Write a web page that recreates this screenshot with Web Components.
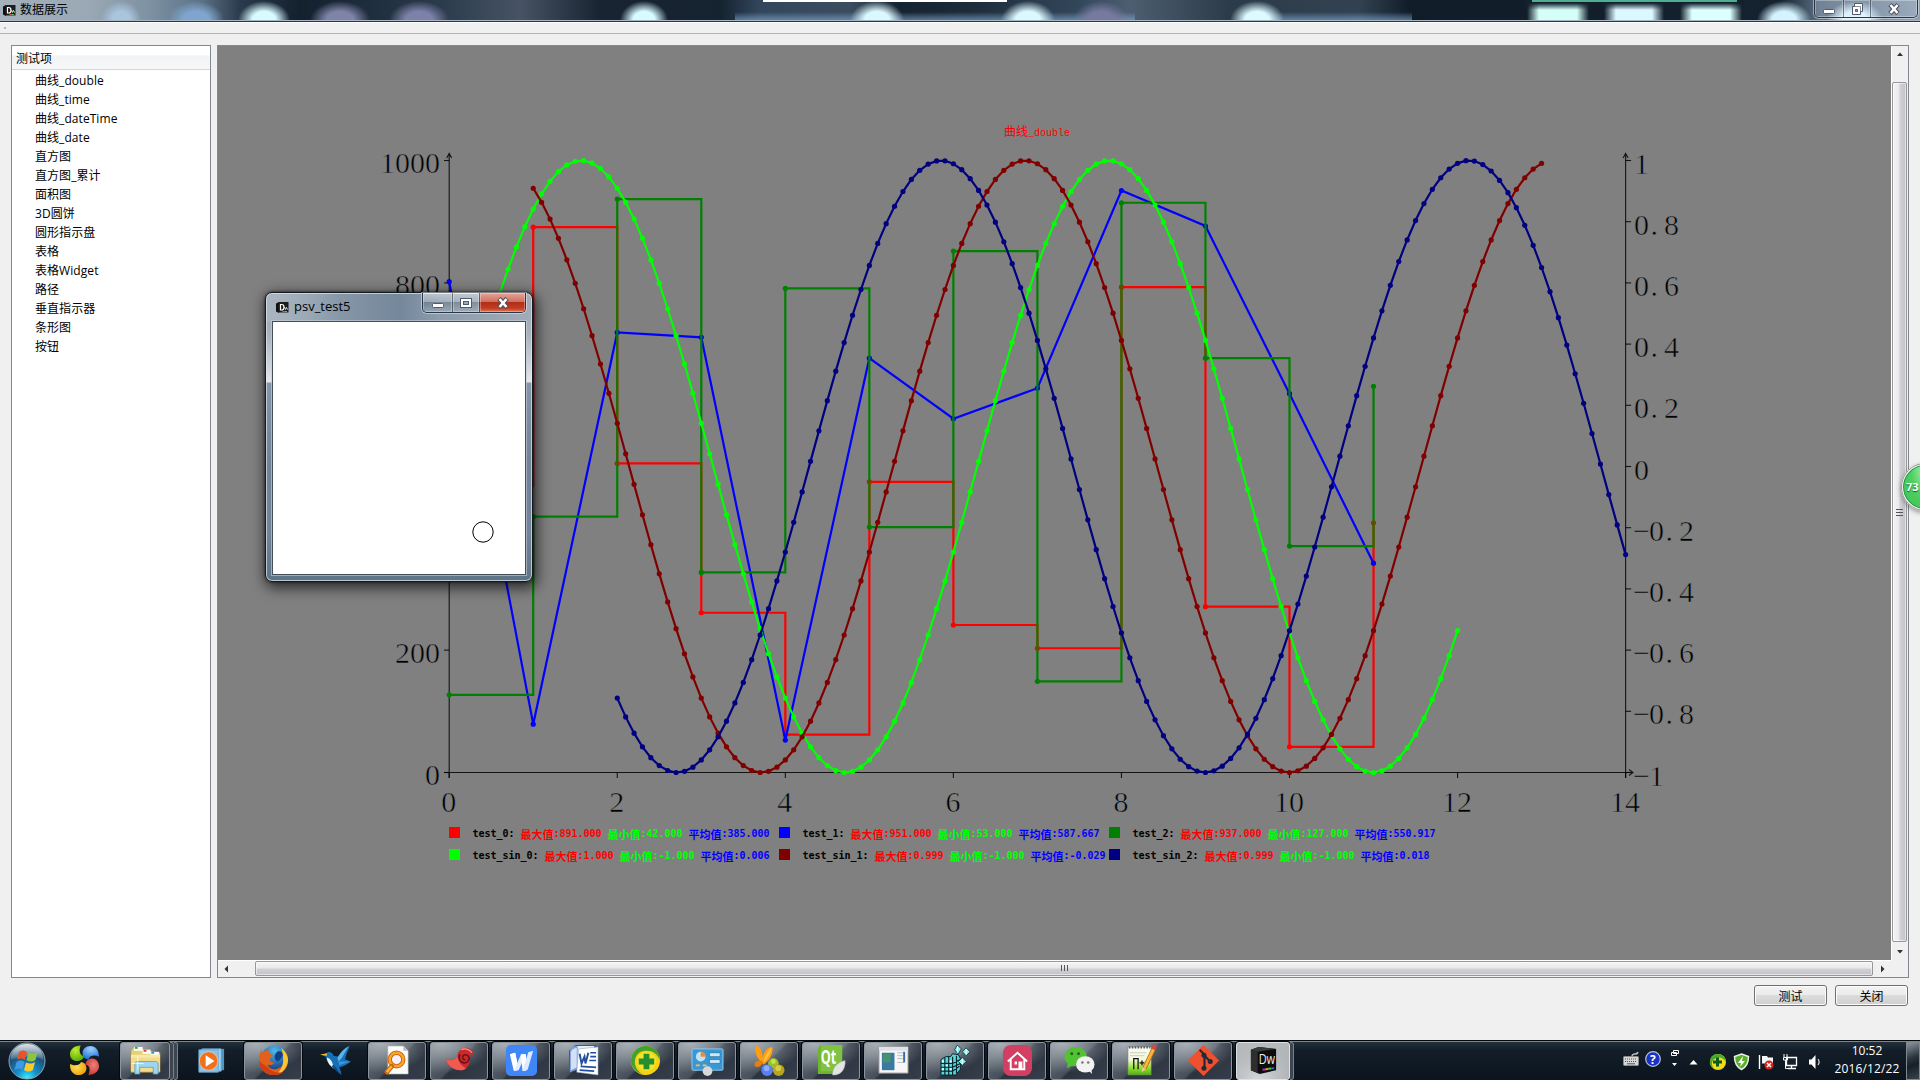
<!DOCTYPE html>
<html lang="zh-CN">
<head>
<meta charset="utf-8">
<title>数据展示</title>
<style>
html,body{margin:0;padding:0;width:1920px;height:1080px;overflow:hidden;background:#f0f0f0}
body{font:12px/16px "Open Sans","Noto Sans CJK SC",sans-serif;color:#000;position:relative}
</style>
</head>
<body>
<demo-desktop></demo-desktop>
<script>
function define(name, html, init) {
  const tpl = document.createElement('template');
  tpl.innerHTML = html;
  customElements.define(name, class extends HTMLElement {
    connectedCallback() {
      if (this.shadowRoot) return;
      const root = this.attachShadow({mode: 'open'});
      root.appendChild(tpl.content.cloneNode(true));
      if (init) init.call(this, root);
    }
  });
}

/* ---------- icons ---------- */
const ICONS = {
app: `<path d="M1 2.500 4 1v11l-3-1.500z" fill="#111"/><path d="M3.500 1h10v10.500h-10z" fill="#1d1d1d"/><path d="M5.500 3.500h1.200c1.600 0 2.300 1.200 2.300 2.700S8.300 9 6.700 9H5.500z" fill="none" stroke="#fff" stroke-width="1.200"/><path d="M9.500 6l1 2.500 1-2 1 2" fill="none" stroke="#dfe" stroke-width=".9"/><path d="M7.500 10.500h2" stroke="#e53"/><path d="M9.500 10.500h2.500" stroke="#5c5"/>`,
orb: `<defs><radialGradient id="o" cx=".5" cy=".98" r=".95"><stop offset="0" stop-color="#3cf0ff"/><stop offset=".3" stop-color="#1590cc"/><stop offset=".7" stop-color="#1d4f78"/><stop offset="1" stop-color="#5a788c"/></radialGradient><linearGradient id="og" x2="0" y2="1"><stop stop-color="#fff" stop-opacity=".8"/><stop offset="1" stop-color="#fff" stop-opacity=".12"/></linearGradient></defs>
<circle cx="19" cy="19" r="18" fill="url(#o)" stroke="#8fa6b4"/><path d="M3 18C2 8 10 2 19 2s17 6 16 16c-9-5-22-4-32 0z" fill="url(#og)"/>
<path d="M11 10c3-2 5-2 8 0l-2 8c-3-2-5-2-8 0z" fill="#e8542a"/><path d="M20.500 10.500c3 1.500 6 1.500 9-.5l-2 8c-3 2-6 2-9 0z" fill="#8cc63e"/><path d="M8.500 20c3-2 5-2 8 0l-2 8c-2-2-5-2-8 0z" fill="#3f9be0"/><path d="M18 20.500c3 1.500 6 1.500 9-.5l-2 8c-3 2-6 2-9 0z" fill="#fcc92c"/>`,
petals: `<defs><radialGradient id="p1" cx=".4" cy=".3" r=".7"><stop stop-color="#c0ee30"/><stop offset="1" stop-color="#5fae06"/></radialGradient><radialGradient id="p2" cx=".5" cy=".2" r=".8"><stop stop-color="#9fd4ff"/><stop offset="1" stop-color="#1c6fd6"/></radialGradient><radialGradient id="p3" cx=".6" cy=".4" r=".7"><stop stop-color="#f0827a"/><stop offset="1" stop-color="#c22f2b"/></radialGradient><radialGradient id="p4" cx=".4" cy=".4" r=".7"><stop stop-color="#ffe052"/><stop offset="1" stop-color="#e99c05"/></radialGradient></defs>
<path d="M12 .5C5 .5 1 5 1 9.500 1 14 4.500 16.500 8 16.500c4 0 7-2 7.500-5C12 11 9.500 7 12 .5z" fill="url(#p1)"/>
<path d="M31 12C31 5 27 1 22.500 1 17 1 14 4.500 14 8c0 4 2 6.500 6 7 1-3.500 5-5.500 11-3z" fill="url(#p2)"/>
<path d="M20 31c7 0 11-4.500 11-9 0-5-3.500-8-7-8-4 0-7 2.500-7 6.500 4 .5 5.500 4 3 10.500z" fill="url(#p3)"/>
<path d="M1 19.500C.5 27 5 31 10 31c5 0 8-3.500 8-7 0-3.500-2-6-5.500-6.500C10.500 21 6.500 22 1 19.500z" fill="url(#p4)"/>`,
folder: `<path d="M1 6l2-3h9l2 2h7l2 3h8v20H1z" fill="#e9cf74" stroke="#b9963c" stroke-width=".6"/><path d="M4 2h9v4H4zM13 5h8v4h-8z" fill="#fff"/><path d="M5 2h3v2H5z" fill="#2b3"/><path d="M14 5h3v2h-3z" fill="#d43"/><path d="M21 7h9v4h-9z" fill="#fff"/><path d="M22 7h3v2h-3z" fill="#29c"/><path d="M1 10h30v17H1z" fill="#f8e9a8"/><path d="M1 13h30v14H1z" fill="#f2dc8c"/><path d="M5 30V20c0-2 1-3 3-3h18c2 0 3 1 3 3v10h-5v-7H10v7z" fill="#9fd5f0" stroke="#4d9cc9" stroke-width=".8"/><path d="M8 12v14M2 19h12" stroke="#fff" stroke-width=".8"/>`,
wmp: `<path d="M8 4h21v22H8z" fill="#4f95c2"/><path d="M6 4h20v23H6z" fill="#a9d6ef" stroke="#5b9dc8"/><path d="M3 5h20v23H3z" fill="#8bc3e6" stroke="#6aa9d4"/><circle cx="13" cy="16.500" r="9.500" fill="#f0701c" stroke="#ffd9b0" stroke-width=".6"/><path d="M10 10.500 19 16.500l-9 6z" fill="#fff"/>`,
firefox: `<defs><radialGradient id="f" cx=".5" cy=".2" r=".8"><stop stop-color="#4fb8ea"/><stop offset="1" stop-color="#123a80"/></radialGradient></defs><circle cx="17" cy="14" r="13.500" fill="url(#f)"/><path d="M19 8c3-3 6-1 7 2-2 3-3 6-6 7-3-2-4-6-1-9z" fill="#0f3f86"/><path d="M4 4c0 2 0 3 1 4 1-2 4-3 6-3-1 2 0 4 4 5 1 2-2 3-3 4 0 3 2 4 5 4-2 3-5 3-7 2 1 4 5 5 8 5 5-1 9-4 9-10 0-4-1-8-4-11 6 2 8 7 8 12 0 9-7 15-15 15S1 25 1 16C1 11 2 8 4 4z" fill="#e2601c"/><path d="M24 3c5 4 7 8 7 13-1 8-6 13-13 15 5-4 8-9 8-15 0-4 0-8-2-13z" fill="#fbc633"/><path d="M1 16c0 9 7 15 15 15 4 0 8-1 10-3-6 1-11 0-15-4-3-3-7-4-10-8z" fill="#cf3f12"/>`,
bird: `<path d="M1 10l5-1c2-3 7-2 8 2l5 1c3-4 7-7 12-11-3 6-4 9-5 14l6 2c-4 3-8 5-12 6 1 3 2 5 2 8-3-3-4-5-6-8-5-1-9-6-10-11z" fill="#1670b8"/><path d="M18 13C21 7 26 3 30 1c-5 7-6 12-11 16z" fill="#56b4ea"/><path d="M19 17l12 0-11 4z" fill="#3a97d8"/><path d="M7 13c0 5 4 10 9 12-4-6-3-10-9-12z" fill="#e4f2fa"/><path d="M0 10l7-1.500V11z" fill="#f7c325"/><path d="M14 20l7 11-9-9z" fill="#124a86"/>`,
search: `<path d="M6 1h16l5 5v24H6z" fill="#fdfdfd" stroke="#aaa" stroke-width=".6"/><path d="M22 1v5h5z" fill="#bbb"/><circle cx="15" cy="15" r="7" fill="#f4f0ff" stroke="#c9650a" stroke-width="4.500"/><circle cx="15" cy="15" r="7" fill="none" stroke="#f9a52a" stroke-width="2.500"/><path d="M10 22 5 28" stroke="#c9650a" stroke-width="5" stroke-linecap="round"/><path d="M10 22 5 28" stroke="#ffb640" stroke-width="2.500"/>`,
snail: `<path d="M2 15c8 1 11-1 12-5 1-5 6-8 10-7 4 0 7 4 6 9-1-2-2-3-3-3 1 9-2 16-9 17C10 26 4 22 2 15z" fill="#cb2a2c"/><path d="M2 15c7 1 10 0 12-4 1 6 3 10 9 13-2 2-4 2-6 2C10 26 4 22 2 15z" fill="#f25a50"/><path d="M22 15c-2 .5-3.500-1.500-2.500-3.500s4.500-2 6 .5-1 7-5 6.500c-4-.5-6.500-5-4-9" fill="none" stroke="#6d1216" stroke-width="1.700"/><path d="M18 5c3-2 8-1 11 3" fill="none" stroke="#ff9a90" stroke-width="1.200"/>`,
wps: `<rect width="32" height="32" rx="5" fill="#3f86f7"/><path d="M4 9.500l5.500-1.500 2 10z" fill="#fff"/><path d="M4 9.500 9.500 8 13 25l-2 1.500H8z" fill="#fff"/><path d="M15.500 9.500h5L13 26H8.500z" fill="#e3edff"/><path d="M15.500 9.500h5l1.500 16-2 1h-3z" fill="#fff"/><path d="M23 7.500l5-1.500-5.500 19-2.500 1.500h-3z" fill="#dfeaff"/>`,
word: `<path d="M8 0h21v26H8l-7-3V6z" fill="#2b5cab"/><path d="M8 1h19v24H8z" fill="#e9f0fb"/><path d="M2 6c1-3 4-5 8-5v24l-8 3z" fill="#7fa0d8"/><path d="M3 7c1-2 3-4 6-4v20l-6 3z" fill="#d4e0f5"/><path d="M11 4l20-2v29l-22-3z" fill="#fff" stroke="#7f97c0" stroke-width=".5"/><path d="M12 9l2 10 3-7 1 7 3-11" fill="none" stroke="#2150a0" stroke-width="2"/><path d="M23 8h6M23 12h6M22 16h7M13 22l16 1M12 26l15 1" stroke="#2150a0" stroke-width="1.800"/>`,
plus360: `<circle cx="16" cy="16" r="15" fill="#f5d313"/><path d="M16 1c9 0 15 7 15 15-3-8-9-11-16-10C9 7 5 11 5 18c0 5 4 10 8 12C5 28 1 22 1 16 1 8 8 1 16 1z" fill="#41a12b"/><circle cx="17" cy="17" r="10" fill="#f3e32a"/><path d="M14 9h6v5h5v6h-5v5h-6v-5H9v-6h5z" fill="#258f2d"/>`,
control: `<rect x="0" y="4" width="32" height="22" rx="1" fill="#3a97d3" stroke="#8dcaf0"/><circle cx="9" cy="12" r="5" fill="#bfe2f6"/><path d="M9 12V7a5 5 0 0 1 5 5z" fill="#f08a28"/><path d="M18 8h11v4H18zM18 15h11v4H18z" fill="#cbe9fa" stroke="#1969a0" stroke-width=".7"/><path d="M4 21h4M11 21h4" stroke="#ffc13a" stroke-width="2"/><circle cx="16" cy="27" r="5" fill="#d9d9d9"/>`,
butterfly: `<path d="M9 19C3 14 0 7 2 0c5 2 7 8 7 13 1-6 5-11 10-11 1 6-2 13-9 18z" fill="#ff9f10"/><path d="M9 17C4 14-1 18 1 22c4 2 7-1 8-4z" fill="#e97e08"/><path d="M10 18C11 12 14 6 18 3c-1 6-4 11-8 15z" fill="#ffc14a"/><circle cx="20" cy="19" r="5.500" fill="#9bbf28"/><circle cx="13.500" cy="26" r="6" fill="#5a80f0"/><circle cx="25.500" cy="26" r="6" fill="#b7a51c"/><circle cx="13" cy="24" r="3" fill="#90aaff"/><circle cx="25" cy="24" r="3" fill="#d7cb4a"/><circle cx="20" cy="17" r="2.500" fill="#c3e254"/>`,
qt: `<path d="M2 3l3-3h22v27l-3 3H2z" fill="#6fb52c"/><path d="M5 0h22v27H5z" fill="#80c342"/><text x="5" y="20" font-family="Open Sans,sans-serif" font-weight="700" font-size="20" fill="#fff" textLength="16" lengthAdjust="spacingAndGlyphs">Qt</text><path d="M17 31c0-8 5-13 13-15 1 8-4 15-11 15z" fill="#e4e4e4" stroke="#aaa" stroke-width=".5"/>`,
winapp: `<path d="M1 2h30v27H1z" fill="#f6f6f6" stroke="#9a9a9a"/><path d="M1 2h30v4H1z" fill="#dfe3e8"/><path d="M4 8h13v18H4z" fill="#3b7aa0"/><path d="M5 9h8v9H5z" fill="#47936d"/><path d="M20 8h7M20 11h7M20 14h7M20 18h7" stroke="#bbb"/><path d="M27 7v11" stroke="#2f6fb6" stroke-width="2"/>`,
cubes: `<path d="M1 15l5-3h5l2-3 6 1 2 4v11l-5 6H1z" fill="#56d8da" stroke="#07242c"/><path d="M1 19h12l8-4M1 23h12l8-4M1 27h12l7-5M5 13v18M9 12v19M13 12v19M17 11v18" stroke="#07242c" stroke-width="1.200" fill="none"/><path d="M2 16h2v2H2zM6 20h2v2H6zM2 24h2v2H2zM10 24h2v2h-2zM10 16h2v2h-2z" fill="#e7ffff"/><path d="M18 0l4 4-3 5-4-4zM27 3l4 4-4 4-4-4zM23 13l4 4-4 4-4-4z" fill="#8ff0f0" stroke="#07242c" stroke-width=".8"/><path d="M18 1v7M27 4v6M23 14v6" stroke="#fff"/>`,
home: `<rect x="1" width="30" height="32" rx="8" fill="#d23f62"/><path d="M6 17l10-9 10 9M9 15v10h14V15" fill="none" stroke="#fff" stroke-width="2"/><path d="M13 17h2.500v3H13zM17 17h4v8h-4z" fill="#fff"/>`,
wechat: `<ellipse cx="12" cy="12" rx="11.500" ry="10" fill="#51c332"/><path d="M4 18l-1 6 6-3z" fill="#51c332"/><ellipse cx="22" cy="20" rx="9.500" ry="8.500" fill="#f2f2f2"/><path d="M25 26l4 4-1-6z" fill="#f2f2f2"/><g fill="#2a5c1b"><circle cx="8" cy="9" r="1.500"/><circle cx="15" cy="9" r="1.500"/></g><g fill="#777"><circle cx="19" cy="18" r="1.300"/><circle cx="25" cy="18" r="1.300"/></g>`,
notepad: `<defs><linearGradient id="n" x2="0" y2="1"><stop stop-color="#fbfbf4"/><stop offset=".45" stop-color="#f2f8dc"/><stop offset=".75" stop-color="#8fe02c"/><stop offset="1" stop-color="#4fae14"/></linearGradient></defs><path d="M2 2h24v29H2z" fill="url(#n)" stroke="#777" stroke-width=".6"/><path d="M3 2.500h22" stroke="#555" stroke-width="2" stroke-dasharray="1.500 1.500"/><path d="M4 8h17M4 11h15" stroke="#b9b9b0" stroke-width=".7"/><path d="M8 25V14h4.500v11M14 18.500h5M16.500 16v5M20 18.500h4" fill="none" stroke="#111" stroke-width="1.300"/><path d="M28.500 4 19 24" stroke="#b86e10" stroke-width="4.600"/><path d="M28.500 4 19 24" stroke="#fbb53c" stroke-width="3"/><path d="M30 0l-2 4.500" stroke="#d04848" stroke-width="4.500"/><path d="M17 23l-1 5 4.500-3z" fill="#e9cf9a"/>`,
git: `<path d="M16 0l16 16-16 16L0 16z" fill="#ef5030"/><path d="M12 5l5 5v14M17 11l6 6" stroke="#222b35" stroke-width="2.200" fill="none"/><g fill="#222b35"><circle cx="16.500" cy="10.500" r="2.600"/><circle cx="16.500" cy="24" r="2.600"/><circle cx="23" cy="17" r="2.600"/></g>`,
dw: `<path d="M3 5l8-3 18 2v22l-17 4-9-4z" fill="#0d0d0d"/><path d="M3 5l7 2v22l-7-3z" fill="#2e2e2e"/><path d="M3 5l8-3 18 2-19 3z" fill="#3c3c3c"/><text x="11" y="20" font-family="Open Sans,sans-serif" font-size="15" fill="#eee" textLength="17" lengthAdjust="spacingAndGlyphs">Dw</text><path d="M15 25.500l3-.3" stroke="#c2c" stroke-width="2"/><path d="M18 25l3-.3" stroke="#e92" stroke-width="2"/><path d="M21 24.600l3-.3" stroke="#4c4" stroke-width="2"/><path d="M24 24.200l3-.3" stroke="#36c" stroke-width="2"/>`
};
define('app-icon', `<style>:host{display:block;flex:none}svg{display:block;width:100%;height:100%;overflow:visible}</style><svg></svg>`, function (r) {
  const n = this.getAttribute('name'), s = r.querySelector('svg');
  s.setAttribute('viewBox', n === 'app' ? '0 0 14 13' : n === 'orb' ? '0 0 38 38' : '0 0 32 32');
  s.innerHTML = ICONS[n];
});

/* ---------- caption buttons ---------- */
define('caption-buttons', `<style>
:host{display:flex;box-sizing:border-box;border:1px solid #2b3644;border-top:0;border-radius:0 0 5px 5px;box-shadow:0 0 0 1px #ffffff70;overflow:hidden}
span{display:grid;place-items:center;box-shadow:inset 0 0 0 1px #ffffff50;background:linear-gradient(#ffffff70,#ffffff30 48%,#00000020 50%,#ffffff20)}
span+span{border-left:1px solid #2b364490}
:host(:not([active])) span{background:#ffffff22}
:host([active]) span:last-child{background:linear-gradient(#e6a499,#d0705f 45%,#b02f19 50%,#c23c20 80%,#e0785a)}
svg{display:block}
</style>
<span style="width:var(--a,28px)"><svg width="14" height="12"><rect x="1.500" y="6.500" width="11" height="4" rx="1" fill="#fff" stroke="#515b6c"/></svg></span>
<span style="width:var(--b,26px)"><svg width="14" height="12" id="m"></svg></span>
<span style="flex:1"><svg width="14" height="12"><path d="M3 1.500 11 10.500M11 1.500 3 10.500" stroke="#4d4f5c" stroke-width="4.600"/><path d="M3.500 2 10.500 10M10.500 2 3.500 10" stroke="#fff" stroke-width="2.600"/></svg></span>`, function (r) {
  r.getElementById('m').innerHTML = this.hasAttribute('restored')
    ? `<path d="M4.500.5h8v8h-2v3h-8v-8h2z" fill="#fff" stroke="#515b6c"/><path d="M2.500 3.500h8v5" fill="none" stroke="#515b6c" stroke-width=".7"/><path d="M5.500 6.500h2v2h-2z" fill="#9ab" stroke="#515b6c"/>`
    : `<rect x="1.500" y="1.500" width="11" height="9" fill="#fff" stroke="#515b6c"/><rect x="4.500" y="4.500" width="5" height="3" fill="#9ab" stroke="#515b6c"/>`;
});

/* ---------- main title bar ---------- */
define('title-bar', `<style>
:host{display:flex;height:23px;box-sizing:border-box;position:relative;align-items:flex-start;border-bottom:1px solid #fff;background:#152332;overflow:hidden}
.glass{position:absolute;inset:0}
.line{position:absolute;left:0;right:0;top:20px;height:1px;background:#a9b8c6;border-bottom:1px solid #2c3442}
.tag{position:absolute;top:0;height:2px}
app-icon{width:14px;height:13px;margin:4px 0 0 2px;position:relative}
.t{position:relative;margin:2px 0 0 4px;flex:1}
caption-buttons{position:relative;width:104px;height:18px;margin-right:2px;--a:28px;--b:26px}
</style>
<div class="glass"></div><div class="line"></div>
<div class="tag" style="left:763px;width:244px;background:#fff"></div><div class="tag" style="left:1532px;width:205px;background:#4fae90"></div>
<app-icon name="app"></app-icon><div class="t"><slot></slot></div><caption-buttons restored></caption-buttons>`, function (r) {
  const blobs = [[264,'#d8fbff',26],[340,'#7f83a8',30],[419,'#7d80a8',30],[196,'#7fa5cf',28],[121,'#a9c4dc',20],[644,'#d8fbff',24],[877,'#dcf8ff',27],[1028,'#dcf8ff',27],[1101,'#77799f',28],[1257,'#dcfaff',27],[1784,'#d4f3ff',27],[1855,'#d8f0ff',28]];
  const bg = blobs.map(([x, c, w]) => `radial-gradient(ellipse ${w}px 19px at ${x}px 20px,${c},${c} 45%,${c}00)`);
  [[1533, 1583, '#d4fff8'], [1610, 1658, '#dcf8ff'], [1686, 1736, '#dcffff']].forEach(([a, b, c]) =>
    bg.push(`linear-gradient(#13202e 3px,#13202e00 10px) ${a - 8}px 0/${b - a + 16}px 23px no-repeat,linear-gradient(90deg,${c}00,${c} 12px,${c} calc(100% - 12px),${c}00) ${a - 6}px 0/${b - a + 12}px 23px no-repeat`));
  bg.push('linear-gradient(#0000 12px,#7fa6cf90 19px) 735px 0/400px 23px no-repeat');
  bg.push('linear-gradient(#0000 12px,#7fa6cf90 19px) 1262px 0/150px 23px no-repeat');
  bg.push('linear-gradient(90deg,#a4b0ba,#99a8b4 90px,#7d91a2 150px,#5c7387 200px,#2b3b4c 240px,#13202e 300px,#2b3b4c 440px,#475363 520px,#182431 600px,#152230 720px,#33465c 760px,#3a4d60 850px,#15222f 900px,#1f2e3c 980px,#33475b 1080px,#4d5e70 1130px,#2c3b49 1230px,#324252 1360px,#101c28 1410px,#14232f 1780px,#5c7086 1820px,#8c9fb4)');
  r.querySelector('.glass').style.background = bg.join(',');
});

/* ---------- tree ---------- */
define('test-tree', `<style>
:host{display:flex;flex-direction:column;box-sizing:border-box;border:1px solid #828790;background:#fff}
header{height:23px;box-sizing:content-box;line-height:26px;padding-left:4px;border-bottom:1px solid #d5d5d5;background:linear-gradient(#fff 40%,#f1f2f4 42%,#f7f8fa)}
div{display:flex;flex-direction:column;padding:1px 0 0 23px}
</style><header><slot name="head"></slot></header><div><slot></slot></div>`);
define('tree-item', `<style>:host{display:block;height:19px;line-height:19px;white-space:nowrap;letter-spacing:.06px}</style><slot></slot>`);

/* ---------- scroll bar ---------- */
define('scroll-bar', `<style>
:host{display:flex;background:#f0f0f0;box-sizing:border-box}
:host([dir=v]){flex-direction:column;width:17px;border-left:1px solid #fff}
:host([dir=h]){height:17px;border-top:1px solid #fff}
i{display:grid;place-items:center;flex:none;width:16px;height:16px}
b{display:grid;place-items:center;flex:1;border:1px solid #979797;border-radius:2px;box-shadow:inset 0 0 0 1px #fff8;box-sizing:border-box}
:host([dir=v]) b{background:linear-gradient(90deg,#f5f5f5,#e9e9eb 45%,#d0d1d5 55%,#c2c3c7);margin:20px 0 2px;width:15px}
:host([dir=h]) b{background:linear-gradient(#f5f5f5,#e9e9eb 45%,#d0d1d5 55%,#c2c3c7);margin:0 2px 0 21px;height:15px}
svg{display:block}
</style><i><svg width="8" height="8"><path id="p" fill="#333"/></svg></i><b><svg width="9" height="9"><path id="g" stroke="#555"/></svg></b><i><svg width="8" height="8"><path id="q" fill="#333"/></svg></i>`, function (r) {
  const v = this.getAttribute('dir') === 'v', s = (i, d) => r.getElementById(i).setAttribute('d', d);
  s('p', v ? 'M1 6 4 2.500 7 6z' : 'M6 .5 2.500 4 6 7.500z'); s('q', v ? 'M1 2 4 5.500 7 2z' : 'M2 .5 5.500 4 2 7.500z');
  s('g', v ? 'M1 1.500h7M1 4.500h7M1 7.500h7' : 'M1.500 1v6M4.500 1v6M7.500 1v6');
});

/* ---------- chart ---------- */
const X0 = 449.2, UX = 84.03, Y0 = 772.5, H = 612;
define('curve-chart', `<style>
:host{display:flex;flex-direction:column;background:#808080;overflow:hidden}
svg{display:block;flex:none}
.axis{font:30px "Liberation Serif","Noto Sans CJK SC",serif;stroke:#808080;stroke-width:.6px}
.ttl{font:10px "Liberation Mono","Noto Sans CJK SC",monospace;fill:#f00}
.legend{display:grid;grid-template-columns:330px 330px 330px;grid-auto-rows:22px;padding:5px 0 0 231px}
</style><svg width="1673" height="776" viewBox="218 46 1673 776"></svg><div class="legend"><slot></slot></div>`, function (r) {
  const px = x => X0 + x * UX, yl = v => Y0 - v / 1000 * H, yr = v => Y0 - (v + 1) / 2 * H;
  let s = '<g stroke="#000" stroke-opacity=".85" stroke-width="1.100" fill="none">';
  const xr = px(14);
  s += `<path d="M444 ${Y0}H1633M1629 ${Y0 - 3}l4 3-4 3M${X0} 778V153.500M${X0 - 2.500} 158l2.500-4.500 2.500 4.500M${xr} 778V153.500M${xr - 2.500} 158l2.500-4.500 2.500 4.500"/>`;
  for (let i = 0; i <= 14; i += 2) s += `<path d="M${px(i)} ${Y0}v5.500"/>`;
  for (let i = 0; i <= 1000; i += 200) s += `<path d="M444 ${yl(i)}h5"/>`;
  for (let i = -5; i <= 5; i++) s += `<path d="M${xr} ${yr(i / 5)}h5.500"/>`;
  s += '</g><g class="axis">';
  const put = (t, x, y) => { t = String(t); s += `<text y="${y}" x="${[...t].map((c, i) => x + i * 15 + (c === '.' ? 1.500 : c === '\u2212' ? -1 : 0)).join(' ')}">${t}</text>`; };
  for (let i = 0; i <= 14; i += 2) put(i, px(i) - String(i).length * 7.500 - .5, 812);
  for (let i = 0; i <= 1000; i += 200) put(i, 439.500 - String(i).length * 15 + .5, yl(i) + 12.500);
  for (let i = -5; i <= 5; i++) put(String(i / 5).replace('-', '\u2212'), 1634, yr(i / 5) + 13);
  s += '</g><text class="ttl" x="1004" y="136" textLength="66"><tspan font-size="12">曲线</tspan>_double</text>';
  const dots = (p, c) => p.map(([x, y]) => `<circle cx="${x.toFixed(2)}" cy="${y.toFixed(2)}" r="2.600" fill="${c}"/>`).join('');
  const line = (p, c, d) => s += `<polyline points="${p.map(q => q[0].toFixed(2) + ',' + q[1].toFixed(2)).join(' ')}" fill="none" stroke="${c}" stroke-width="2.200"/>` + dots(d || p, c);
  const step = (vals, c) => {
    const p = [], d = vals.map((v, i) => [px(i), yl(v)]);
    vals.forEach((v, i) => { p.push([px(i), yl(v)]); if (i < vals.length - 1) p.push([px(i + 1), yl(v)]); });
    line(p, c, d);
  };
  step([468,891,505,261,62,475,241,203,793,271,42,408], '#ff0000');
  line([802,79,719,711,53,677,578,628,951,893,619,342].map((v, i) => [px(i), yl(v)]), '#0000ff');
  step([127,418,937,327,791,401,852,149,931,677,370,631], '#008000');
  [['#00ff00', 0], ['#800000', 1], ['#000080', 2]].forEach(([c, k]) => {
    const p = [];
    for (let i = 0; i <= 120; i++) p.push([px(k + i / 10), yr(Math.sin(2 * k + i / 10) )]);
    line(p, c);
  });
  r.querySelector('svg').innerHTML = s;
});
define('legend-entry', `<style>
:host{display:flex;align-items:flex-start;white-space:pre;font:bold 10px/14px "DejaVu Sans Mono","Noto Sans CJK SC",monospace;letter-spacing:-.02px}
i{width:11px;height:11px;margin-right:12.500px;flex:none}
span{display:flex}
.k{font-family:"Noto Sans CJK SC",sans-serif;font-size:11px;width:33px;line-height:14px;letter-spacing:0}
</style><i></i><span id="n"></span>`, function (r) {
  r.querySelector('i').style.background = this.getAttribute('color');
  r.getElementById('n').textContent = this.getAttribute('label') + ': ';
  const v = this.getAttribute('values').split(' ');
  [['最大值', '#f00'], ['最小值', '#0f0'], ['平均值', '#00f']].forEach(([k, c], i) => {
    const e = document.createElement('span');
    e.style.color = c;
    e.innerHTML = `<span class="k">${k}</span>:${v[i]}${i < 2 ? ' ' : ''}`;
    r.appendChild(e);
  });
});

/* ---------- push button ---------- */
define('push-button', `<style>:host{display:grid;place-items:center;width:73px;height:21px;box-sizing:border-box;border:1px solid #707070;border-radius:3px;box-shadow:inset 0 0 0 1px #fcfcfc;background:linear-gradient(#f3f3f3,#ebebeb 49%,#dcdcdc 50%,#cfcfcf);line-height:17px;padding-top:1px}</style><slot></slot>`);

/* ---------- floating aero window ---------- */
define('float-window', `<style>
:host{position:absolute;left:265px;top:292px;width:268px;height:290px;box-sizing:border-box;border:1px solid #16191d;border-radius:7px;display:flex;flex-direction:column;padding:0 7px 7px;
background:linear-gradient(90deg,#aab5c0 0,#aab5c000 75px) 0 0/100% 29px no-repeat,linear-gradient(90deg,#9aa8b6,#74889b 50%,#8b9cac 65%,#a4abb8) 0 0/100% 29px no-repeat,linear-gradient(#9aa6b3,#a7b1bc 40px,#e4e6ea 89px,#8496a8 90px,#708397 170px,#71849a 240px,#5e7487);
box-shadow:inset 0 0 0 1px #e2e9f0b0,0 0 3px #000b,2px 4px 14px 2px #000a}
header{display:flex;height:29px;align-items:flex-start;flex:none}
app-icon{width:14px;height:13px;margin:8px 0 0 2px}
.t{flex:1;margin:5px 0 0 5px;font-size:13px;line-height:16px}
caption-buttons{width:104px;height:20px;margin-right:-1px;--a:29px;--b:26px}
main{flex:1;background:#fff;border:1px solid #454d5a;box-shadow:0 0 0 1px #c4ced9a0;margin:-1px -1px -1px}
svg{display:block}
</style><header><app-icon name="app"></app-icon><div class="t"><slot></slot></div><caption-buttons active></caption-buttons></header>
<main><svg width="250" height="251"><circle cx="210" cy="210" r="10.200" fill="#fff" stroke="#000"/></svg></main>`);

/* ---------- floating accelerator ball ---------- */
define('speed-ball', `<style>:host{position:absolute;left:1901px;top:463px;width:48px;height:48px;box-sizing:border-box;border-radius:50%;border:2px solid #f4f4f4;outline:1px solid #999;outline-offset:-1px;background:radial-gradient(ellipse at 50% 10%,#a9eeb0,#4fd061 45%,#3dc052);box-shadow:inset 0 0 0 1px #1f9a4a,0 2px 5px #0006;font:bold 11px/44px "Open Sans",sans-serif;color:#fff;padding-left:3px;text-shadow:0 1px 1px #063}</style><slot></slot>`);

/* ---------- task bar ---------- */
define('task-button', `<style>
:host{display:flex;width:58px;height:38px;box-sizing:border-box;align-items:stretch}
div{flex:1;display:grid;place-items:center;box-sizing:border-box;border:1px solid transparent;border-radius:3px}
:host([open]) div{border-color:#8b959e;box-shadow:0 0 0 1px #05090d;background:radial-gradient(ellipse 50px 30px at 20% 0,#a9b0b7,#a9b0b700),linear-gradient(135deg,#6d767f,#454e59 48%,#2a333e 52%,#353e4a)}
:host([active]) div{background:radial-gradient(ellipse 60px 40px at 40% 100%,#d4d6d8,#d4d6d800),linear-gradient(#b4b8bb,#8d9296);border-color:#dfe2e4}
s{display:none;width:3px;border:1px solid #77818a;border-left:0;border-radius:0 3px 3px 0;background:#3d4650}
:host([stack]) s{display:block}
:host([one]) s:last-child{display:none}
app-icon{width:31px;height:31px}
</style><div><app-icon></app-icon></div><s></s><s></s>`, function (r) {
  const o = r.querySelector('app-icon'), n = document.createElement('app-icon');
  n.setAttribute('name', this.getAttribute('icon'));
  o.replaceWith(n);
});
define('tray-area', `<style>
:host{display:flex;align-items:center;height:40px;color:#fff}
svg{display:block;flex:none}
.clock{width:78px;text-align:center;font:12px/18px "Open Sans",sans-serif;margin:0 0 1px 4px}
.show{width:14px;height:38px;box-sizing:border-box;border:1px solid #7d8890;background:linear-gradient(160deg,#8c959c,#2d3740 40%,#161f28 60%,#39434c)}
</style>
<svg width="204" height="40" viewBox="1620 1040 204 40">
<g><path d="M1632 1055c1-4 5 0 6-4" fill="none" stroke="#b9bcc0" stroke-width="1.500"/><rect x="1623.500" y="1055.500" width="15" height="9" rx="1" fill="#d6d6d6" stroke="#8c8c8c"/><path d="M1625 1058h12M1625 1060.500h12" stroke="#555" stroke-dasharray="1 1"/><path d="M1627 1062.800h8" stroke="#555"/></g>
<circle cx="1653" cy="1058" r="7.300" fill="#1a30c8" stroke="#b9c3d8" stroke-width="1.200"/><text x="1650" y="1062.500" font-family="Open Sans,sans-serif" font-weight="700" font-size="12" fill="#fff">?</text>
<path d="M1673.500 1049.500h5v3h-5zM1671.500 1051.500h5v3h-5z" fill="#111a22" stroke="#fff"/><path d="M1672 1062h5l-2.500 3zM1689.500 1063.500h8l-4-4.500z" fill="#fff"/>
<circle cx="1718" cy="1061" r="8" fill="#f4dc16"/><path d="M1718 1053a8 8 0 0 1 8 8c-3-5-8-6-13-2-2 3-1 6 1 9a8 8 0 0 1 4-15z" fill="#4aa92c"/><path d="M1716 1056.500h3v3h3v3h-3v3h-3v-3h-3v-3h3z" fill="#0c5a20"/>
<path d="M1741.500 1053l7 2.500c0 7-2 10.500-7 13-5-2.500-7-6-7-13z" fill="#59ad28" stroke="#e8f0e4" stroke-width="1.500"/><path d="M1743 1055l-5 7h3l-1 4 5-6h-3z" fill="#fff"/>
<path d="M1759.500 1054v14" stroke="#fff" stroke-width="1.400"/><path d="M1762 1055h5l1 1.500h5v7h-6l-1-1h-4z" fill="#f4f4f4"/><circle cx="1769" cy="1064" r="4.500" fill="#d8231d"/><path d="M1767 1062l4 4M1771 1062l-4 4" stroke="#fff" stroke-width="1.400"/>
<path d="M1786.500 1056.500h10v8h-10zM1788 1067.500h8M1791.500 1064v3" fill="#17212b" stroke="#fff" stroke-width="1.300"/><path d="M1784 1053v3M1787 1053v3M1783.500 1056.500h4v2.500h-4zM1785.500 1059v8.500h3" fill="none" stroke="#fff"/>
<path d="M1809 1058.500h2.500l4-4.500v14l-4-4.500h-2.500z" fill="#fff"/><path d="M1818 1058c1.500 2 1.500 4 0 6" fill="none" stroke="#ddd" stroke-width="1.200"/>
</svg>
<div class="clock"><div>10:52</div><div style="letter-spacing:.15px">2016/12/22</div></div><div class="show"></div>`);
define('task-bar', `<style>
:host{display:flex;height:40px;box-sizing:border-box;align-items:center;gap:4px;background:linear-gradient(#06090c 0 1px,#7a8792 1px 2px,#22303d 2px,#131e29 10px,#0b141d);padding-top:1px}
app-icon.orb{width:38px;height:38px;margin:0 5px 0 8px}
task-button{flex:none}
tray-area{margin-left:auto}
</style>
<app-icon class="orb" name="orb"></app-icon>
<task-button icon="petals" style="margin-right:3px"></task-button>
<task-button icon="folder" open stack></task-button>
<task-button icon="wmp"></task-button>
<task-button icon="firefox" open></task-button>
<task-button icon="bird"></task-button>
<task-button icon="search" open></task-button>
<task-button icon="snail" open></task-button>
<task-button icon="wps" open></task-button>
<task-button icon="word" open></task-button>
<task-button icon="plus360" open></task-button>
<task-button icon="control" open></task-button>
<task-button icon="butterfly" open></task-button>
<task-button icon="qt" open></task-button>
<task-button icon="winapp" open></task-button>
<task-button icon="cubes" open></task-button>
<task-button icon="home" open></task-button>
<task-button icon="wechat" open></task-button>
<task-button icon="notepad" open></task-button>
<task-button icon="git" open></task-button>
<task-button icon="dw" open active stack one></task-button>
<tray-area></tray-area>`);

/* ---------- desktop ---------- */
define('demo-desktop', `<style>
:host{display:flex;flex-direction:column;width:1920px;height:1080px;background:#f0f0f0;position:relative;overflow:hidden}
.tool{height:11px;box-sizing:border-box;border-bottom:1px solid #b4b4b4;padding:4px 0 0 4px}
.tool i{display:block;width:2px;height:2px;background:#b8b8b8}
.main{display:flex;height:933px;gap:6px;padding:11px 11px 0}
test-tree{width:200px}
.view{flex:1;box-sizing:border-box;border:1px solid #828790;display:flex;flex-direction:column}
.row{display:flex;flex:1;min-height:0}
curve-chart{width:1673px}
.bot{display:flex}
.bot scroll-bar{flex:1}
.bot u{width:17px;background:#f0f0f0}
.btns{display:flex;justify-content:flex-end;gap:8px;padding:7px 12px 34px 0}
</style>
<title-bar>数据展示</title-bar>
<div class="tool"><i></i></div>
<div class="main">
<test-tree><span slot="head">测试项</span>
<tree-item>曲线_double</tree-item><tree-item>曲线_time</tree-item><tree-item>曲线_dateTime</tree-item><tree-item>曲线_date</tree-item><tree-item>直方图</tree-item><tree-item>直方图_累计</tree-item><tree-item>面积图</tree-item><tree-item>3D圆饼</tree-item><tree-item>圆形指示盘</tree-item><tree-item>表格</tree-item><tree-item>表格Widget</tree-item><tree-item>路径</tree-item><tree-item>垂直指示器</tree-item><tree-item>条形图</tree-item><tree-item>按钮</tree-item>
</test-tree>
<div class="view"><div class="row">
<curve-chart>
<legend-entry color="#ff0000" label="test_0" values="891.000 42.000 385.000"></legend-entry>
<legend-entry color="#0000ff" label="test_1" values="951.000 53.000 587.667"></legend-entry>
<legend-entry color="#008000" label="test_2" values="937.000 127.000 550.917"></legend-entry>
<legend-entry color="#00ff00" label="test_sin_0" values="1.000 -1.000 0.006"></legend-entry>
<legend-entry color="#800000" label="test_sin_1" values="0.999 -1.000 -0.029"></legend-entry>
<legend-entry color="#000080" label="test_sin_2" values="0.999 -1.000 0.018"></legend-entry>
</curve-chart>
<scroll-bar dir="v"></scroll-bar></div>
<div class="bot"><scroll-bar dir="h"></scroll-bar><u></u></div></div>
</div>
<div class="btns"><push-button>测试</push-button><push-button>关闭</push-button></div>
<task-bar></task-bar>
<float-window>psv_test5</float-window>
<speed-ball>73</speed-ball>`);
</script>
</body>
</html>
